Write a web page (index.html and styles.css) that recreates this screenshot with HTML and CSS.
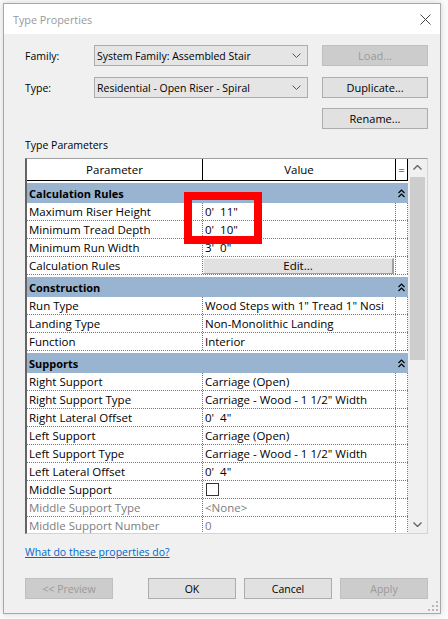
FILE: index.html
```html
<!DOCTYPE html>
<html>
<head>
<meta charset="utf-8">
<link rel="stylesheet" href="styles.css">
</head>
<body>
<div class="dialog">
  <div class="titlebar">
    <span class="title">Type Properties</span>
    <svg class="close" width="11" height="11" viewBox="0 0 11 11"><path d="M0.5 0.5 L10.5 10.5 M10.5 0.5 L0.5 10.5" stroke="#444" stroke-width="1" fill="none"/></svg>
  </div>
  <div class="content">
    <div class="frow">
      <span class="lbl">Family:</span>
      <div class="combo"><span>System Family: Assembled Stair</span><svg width="9" height="5" viewBox="0 0 9 5"><polyline points="0.5,0.5 4.5,4.5 8.5,0.5" fill="none" stroke="#555" stroke-width="1"/></svg></div>
      <div class="btn side disabled">Load...</div>
    </div>
    <div class="frow r2">
      <span class="lbl">Type:</span>
      <div class="combo"><span>Residential - Open Riser - Spiral</span><svg width="9" height="5" viewBox="0 0 9 5"><polyline points="0.5,0.5 4.5,4.5 8.5,0.5" fill="none" stroke="#555" stroke-width="1"/></svg></div>
      <div class="btn side">Duplicate...</div>
    </div>
    <div class="frow r3">
      <div class="btn side">Rename...</div>
    </div>
    <div class="section-label">Type Parameters</div>
    <div class="grid">
      <div class="rows">
        <div class="hdr">
          <div class="c1">Parameter</div>
          <div class="c2">Value</div>
          <div class="c3">=</div>
        </div>
        <div class="group first"><span>Calculation Rules</span><div class="gicon"><svg width="7" height="9" viewBox="0 0 7 9"><polyline points="0.5,4 3.5,1 6.5,4" fill="none" stroke="#000" stroke-width="1.2"/><polyline points="0.5,8 3.5,5 6.5,8" fill="none" stroke="#000" stroke-width="1.2"/></svg></div></div>
        <div class="row"><div class="c1">Maximum Riser Height</div><div class="c2">0'  11"</div><div class="c3"></div></div>
        <div class="row"><div class="c1">Minimum Tread Depth</div><div class="c2">0'  10"</div><div class="c3"></div></div>
        <div class="row"><div class="c1">Minimum Run Width</div><div class="c2">3'  0"</div><div class="c3"></div></div>
        <div class="row"><div class="c1">Calculation Rules</div><div class="c2 btncell"><div class="editbtn">Edit...</div></div><div class="c3"></div></div>
        <div class="group"><span>Construction</span><div class="gicon"><svg width="7" height="9" viewBox="0 0 7 9"><polyline points="0.5,4 3.5,1 6.5,4" fill="none" stroke="#000" stroke-width="1.2"/><polyline points="0.5,8 3.5,5 6.5,8" fill="none" stroke="#000" stroke-width="1.2"/></svg></div></div>
        <div class="row"><div class="c1">Run Type</div><div class="c2">Wood Steps with 1" Tread 1" Nosi</div><div class="c3"></div></div>
        <div class="row"><div class="c1">Landing Type</div><div class="c2">Non-Monolithic Landing</div><div class="c3"></div></div>
        <div class="row"><div class="c1">Function</div><div class="c2">Interior</div><div class="c3"></div></div>
        <div class="group"><span>Supports</span><div class="gicon"><svg width="7" height="9" viewBox="0 0 7 9"><polyline points="0.5,4 3.5,1 6.5,4" fill="none" stroke="#000" stroke-width="1.2"/><polyline points="0.5,8 3.5,5 6.5,8" fill="none" stroke="#000" stroke-width="1.2"/></svg></div></div>
        <div class="row"><div class="c1">Right Support</div><div class="c2">Carriage (Open)</div><div class="c3"></div></div>
        <div class="row"><div class="c1">Right Support Type</div><div class="c2">Carriage - Wood - 1 1/2" Width</div><div class="c3"></div></div>
        <div class="row"><div class="c1">Right Lateral Offset</div><div class="c2">0'  4"</div><div class="c3"></div></div>
        <div class="row"><div class="c1">Left Support</div><div class="c2">Carriage (Open)</div><div class="c3"></div></div>
        <div class="row"><div class="c1">Left Support Type</div><div class="c2">Carriage - Wood - 1 1/2" Width</div><div class="c3"></div></div>
        <div class="row"><div class="c1">Left Lateral Offset</div><div class="c2">0'  4"</div><div class="c3"></div></div>
        <div class="row"><div class="c1">Middle Support</div><div class="c2"><span class="check"></span></div><div class="c3"></div></div>
        <div class="row dis"><div class="c1">Middle Support Type</div><div class="c2">&lt;None&gt;</div><div class="c3"></div></div>
        <div class="row dis"><div class="c1">Middle Support Number</div><div class="c2">0</div><div class="c3"></div></div>
      </div>
      <div class="sbar">
        <div class="arrow"><svg width="9" height="5" viewBox="0 0 9 5"><polyline points="0.5,4.5 4.5,0.5 8.5,4.5" fill="none" stroke="#606060" stroke-width="1.3"/></svg></div>
        <div class="thumb"></div>
        <div class="track"></div>
        <div class="arrow"><svg width="9" height="5" viewBox="0 0 9 5"><polyline points="0.5,0.5 4.5,4.5 8.5,0.5" fill="none" stroke="#606060" stroke-width="1.3"/></svg></div>
      </div>
    </div>
    <a class="link" href="#">What do these properties do?</a>
    <div class="buttons">
      <div class="btn bb disabled">&lt;&lt; Preview</div>
      <div class="btn bb ok">OK</div>
      <div class="btn bb">Cancel</div>
      <div class="btn bb disabled">Apply</div>
    </div>
  </div>
  <svg class="grip" width="10" height="10" viewBox="0 0 10 10"><g fill="#b8b8b8"><rect x="8" y="0" width="2" height="2"/><rect x="4" y="4" width="2" height="2"/><rect x="8" y="4" width="2" height="2"/><rect x="0" y="8" width="2" height="2"/><rect x="4" y="8" width="2" height="2"/><rect x="8" y="8" width="2" height="2"/></g></svg>
</div>
<div class="redbox"></div>
</body>
</html>
```

FILE: styles.css
```css
html, body {
  margin: 0;
  padding: 0;
}
body {
  background: #fafafa;
  width: 448px;
  height: 619px;
  overflow: hidden;
  font-family: "Open Sans", "Noto Sans", sans-serif;
  font-size: 10.5px;
  color: #000;
  position: relative;
}
.dialog {
  position: relative;
  box-sizing: border-box;
  margin: 3px 0 0 3px;
  width: 438px;
  height: 611px;
  border: 1px solid #a8a8a8;
  background: #f0f0f0;
  box-shadow: 0 0 6px rgba(0,0,0,0.15);
}
.titlebar {
  height: 30px;
  background: #fff;
  display: flex;
  align-items: center;
  padding-left: 9px;
  padding-right: 9px;
}
.title {
  flex: 1;
  color: #999;
  font-size: 10.8px;
}
.content {
  padding: 11px 12px 0 21px;
}
.frow {
  display: flex;
  align-items: center;
  height: 21px;
}
.frow.r2 { margin-top: 11px; }
.frow.r3 { margin-top: 10px; justify-content: flex-end; }
.lbl {
  width: 69px;
}
.combo {
  box-sizing: border-box;
  width: 214px;
  height: 21px;
  background: #e5e5e5;
  border: 1px solid #acacac;
  display: flex;
  align-items: center;
  padding: 0 6px 0 2px;
}
.combo span { flex: 1; }
.btn {
  box-sizing: border-box;
  height: 21px;
  background: #e1e1e1;
  border: 1px solid #adadad;
  display: flex;
  align-items: center;
  justify-content: center;
}
.btn.side {
  width: 106px;
  margin-left: 14px;
  font-size: 11px;
}
.btn.disabled {
  background: #cccccc;
  border-color: #bfbfbf;
  color: #9a9a9a;
}
.section-label {
  margin-top: 8px;
  line-height: 16px;
  height: 16px;
  margin-bottom: 5px;
}
.grid {
  display: flex;
  width: 403px;
  height: 376px;
  box-sizing: border-box;
  border-top: 1px solid #a0a0a0;
  border-left: 2px solid #646464;
  border-right: 1px solid #d4d4d4;
  border-bottom: 1px solid #d4d4d4;
  background: #fff;
  overflow: hidden;
  font-size: 11.5px;
}
.rows {
  width: 381px;
  display: flex;
  flex-direction: column;
  flex-shrink: 0;
}
.hdr {
  display: flex;
  height: 21px;
  border-bottom: 1px solid #000;
  flex-shrink: 0;
  background: #fff;
}
.hdr > div {
  display: flex;
  align-items: center;
  justify-content: center;
  box-sizing: border-box;
}
.hdr .c1 { width: 176px; border-right: 1px solid #000; }
.hdr .c2 { flex: 1; }
.hdr .c3 { width: 13px; border-left: 1px solid #000; border-right: 1px solid #000; }
.group {
  flex-shrink: 0;
  height: 20px;
  border-top: 2px solid #fff;
  background: #99b4d1;
  display: flex;
  align-items: center;
  font-weight: bold;
  font-size: 11px;
  padding-left: 2px;
}
.group span { flex: 1; }
.gicon {
  width: 13px;
  display: flex;
  justify-content: center;
}
.row {
  flex-shrink: 0;
  display: flex;
  height: 18px;
  box-sizing: border-box;
  border-bottom: 1px dotted #777;
}
.row > div {
  box-sizing: border-box;
  display: flex;
  align-items: center;
  white-space: pre;
  overflow: hidden;
}
.row .c1 { width: 176px; padding-left: 2px; border-right: 1px dotted #777; }
.row .c2 { flex: 1; padding-left: 2px; min-width: 0; }
.row .c3 { width: 13px; border-left: 1px dotted #777; border-right: 1px dotted #777; }
.row.dis { color: #7d7d7d; }
.btncell { padding: 0 !important; }
.editbtn {
  box-sizing: border-box;
  width: 191px;
  height: 16px;
  background: #e1e1e1;
  border-top: 1px solid #f4f4f4;
  border-left: 1px solid #f4f4f4;
  border-right: 2px solid #a0a0a0;
  border-bottom: 1px solid #a0a0a0;
  display: flex;
  align-items: center;
  justify-content: center;
}
.check {
  width: 13px;
  height: 13px;
  box-sizing: border-box;
  border: 1px solid #333;
  background: #fff;
  margin-left: 1px;
}
.sbar {
  width: 19px;
  background: #f0f0f0;
  display: flex;
  flex-direction: column;
  align-items: center;
}
.arrow {
  height: 17px;
  width: 100%;
  display: flex;
  align-items: center;
  justify-content: center;
  flex-shrink: 0;
}
.thumb {
  width: 15px;
  height: 183px;
  background: #cdcdcd;
  margin-top: 1px;
  flex-shrink: 0;
}
.track { flex: 1; }
.link {
  display: block;
  margin-top: 10px;
  line-height: 16px;
  height: 16px;
  color: #0066cc;
  text-decoration: underline;
  width: max-content;
}
.buttons {
  display: flex;
  margin-top: 18px;
}
.btn.bb { width: 88px; margin-left: 8px; }
.btn.bb:first-child { margin-left: 0; }
.btn.bb.ok { margin-left: 35px; }
.grip {
  position: absolute;
  right: 2px;
  bottom: 2px;
}
.redbox {
  position: absolute;
  left: 184px;
  top: 192px;
  width: 62px;
  height: 36px;
  border: 8px solid #ff0000;
}
```
